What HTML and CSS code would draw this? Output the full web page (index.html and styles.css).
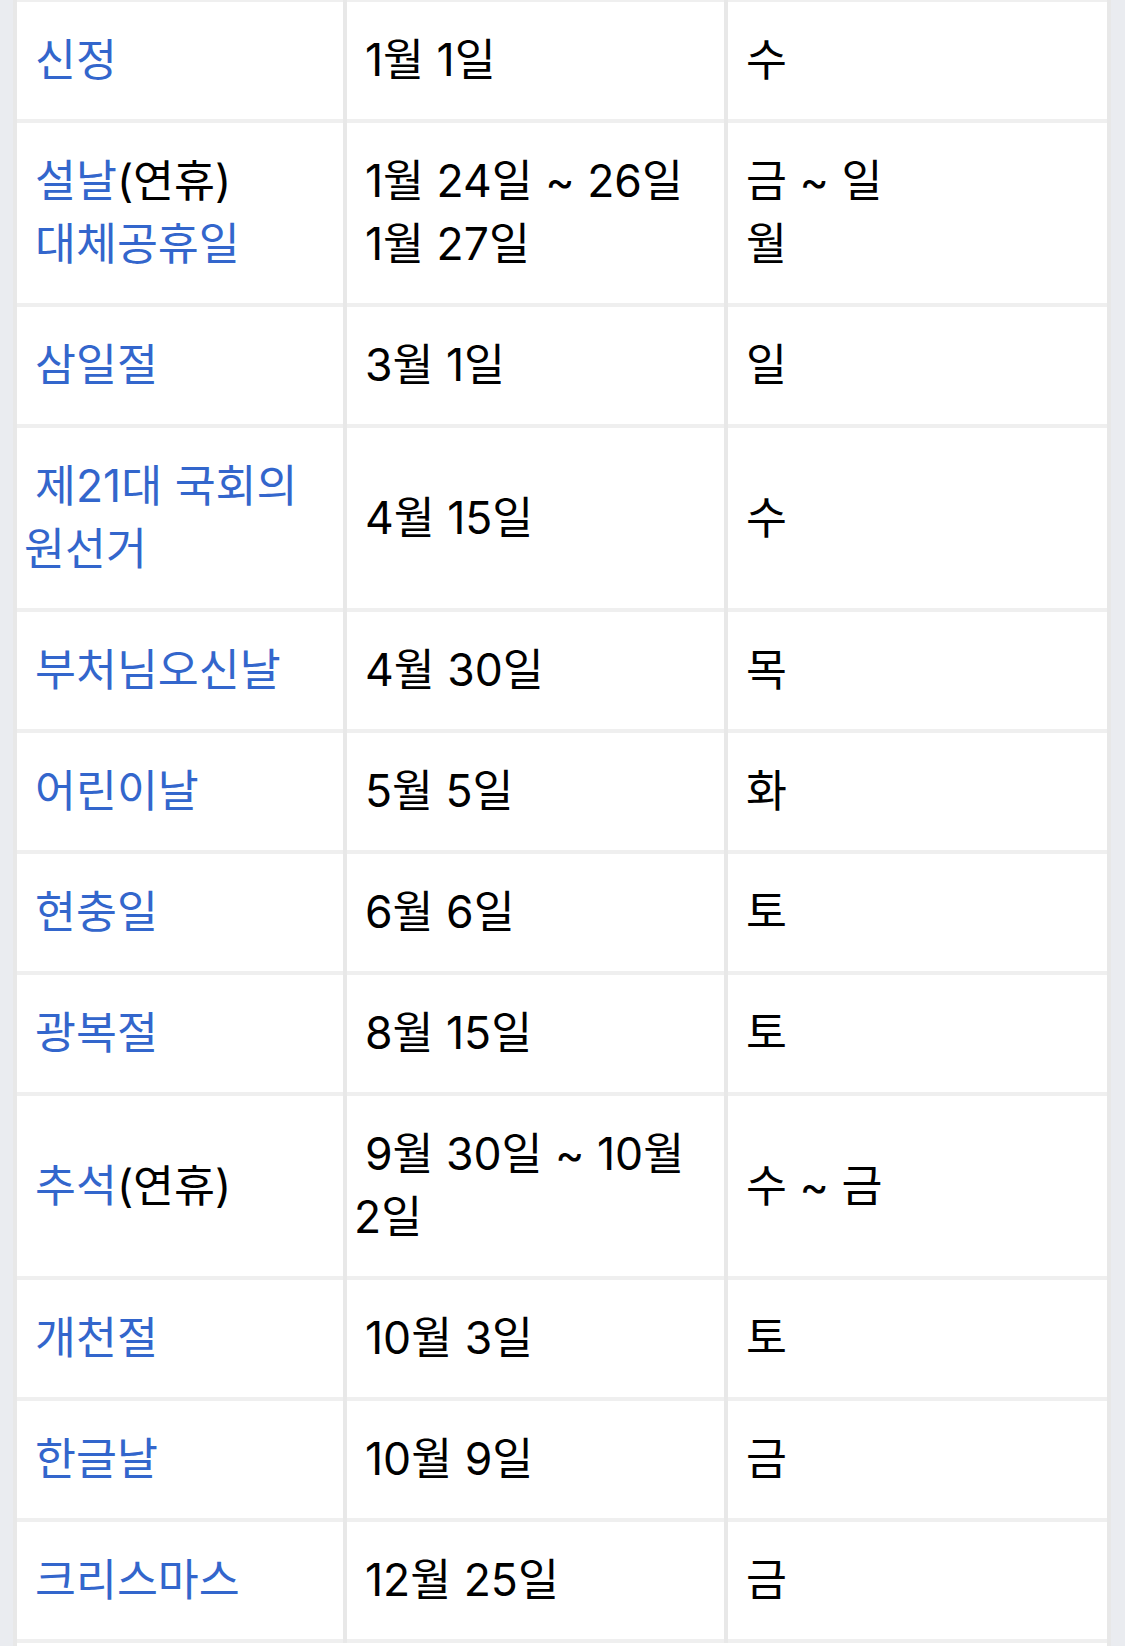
FILE: index.html
```html
<!DOCTYPE html>
<html lang="ko">
<head>
<meta charset="utf-8">
<title>2020년 공휴일</title>
<link rel="stylesheet" href="styles.css">
</head>
<body>
<table class="holidays">
  <colgroup>
    <col class="col-name">
    <col class="col-date">
    <col class="col-day">
  </colgroup>
  <tbody>
    <tr class="first">
      <td><div class="ln"><a href="#">신정</a></div></td>
      <td><div class="ln">1월 1일</div></td>
      <td><div class="ln">수</div></td>
    </tr>
    <tr>
      <td><div class="ln"><a href="#">설날</a>(연휴)</div><div class="ln"><a href="#">대체공휴일</a></div></td>
      <td><div class="ln">1월 24일 ~ 26일</div><div class="ln">1월 27일</div></td>
      <td><div class="ln">금 ~ 일</div><div class="ln">월</div></td>
    </tr>
    <tr>
      <td><div class="ln"><a href="#">삼일절</a></div></td>
      <td><div class="ln">3월 1일</div></td>
      <td><div class="ln">일</div></td>
    </tr>
    <tr>
      <td><div class="ln"><a href="#">제21대 국회의원선거</a></div></td>
      <td><div class="ln">4월 15일</div></td>
      <td><div class="ln">수</div></td>
    </tr>
    <tr>
      <td><div class="ln"><a href="#">부처님오신날</a></div></td>
      <td><div class="ln">4월 30일</div></td>
      <td><div class="ln">목</div></td>
    </tr>
    <tr>
      <td><div class="ln"><a href="#">어린이날</a></div></td>
      <td><div class="ln">5월 5일</div></td>
      <td><div class="ln">화</div></td>
    </tr>
    <tr>
      <td><div class="ln"><a href="#">현충일</a></div></td>
      <td><div class="ln">6월 6일</div></td>
      <td><div class="ln">토</div></td>
    </tr>
    <tr>
      <td><div class="ln"><a href="#">광복절</a></div></td>
      <td><div class="ln">8월 15일</div></td>
      <td><div class="ln">토</div></td>
    </tr>
    <tr>
      <td><div class="ln"><a href="#">추석</a>(연휴)</div></td>
      <td><div class="ln">9월 30일 ~ 10월 2일</div></td>
      <td><div class="ln">수 ~ 금</div></td>
    </tr>
    <tr>
      <td><div class="ln"><a href="#">개천절</a></div></td>
      <td><div class="ln">10월 3일</div></td>
      <td><div class="ln">토</div></td>
    </tr>
    <tr>
      <td><div class="ln"><a href="#">한글날</a></div></td>
      <td><div class="ln">10월 9일</div></td>
      <td><div class="ln">금</div></td>
    </tr>
    <tr>
      <td><div class="ln"><a href="#">크리스마스</a></div></td>
      <td><div class="ln">12월 25일</div></td>
      <td><div class="ln">금</div></td>
    </tr>
    <tr class="tail">
      <td colspan="3"></td>
    </tr>
  </tbody>
</table>
</body>
</html>
```
FILE: styles.css
```css
html, body {
  margin: 0;
  padding: 0;
  background: #eaecf0;
}

body {
  padding: 0 14px 0 13px;
  font-family: "Inter", "Noto Sans CJK KR", sans-serif;
  font-size: 44.5px;
  line-height: 63px;
  color: #000;
}

.holidays {
  width: 1098px;
  table-layout: fixed;
  border-collapse: separate;
  border-spacing: 4px 0;
  background: #e8e8e8;
}

.col-name { width: 326px; }
.col-date { width: 377px; }
.col-day  { width: 379px; }

.holidays td {
  background: #fff;
  padding: 27px 8px 27px 7px;
  vertical-align: middle;
  border-bottom: 4px solid #efefef;
}

.holidays .first td {
  border-top: 2px solid #efefef;
}

.ln {
  text-indent: 11px;
}

.holidays a {
  color: #3366cc;
  text-decoration: none;
}

.holidays .tail td {
  padding: 0;
  height: 20px;
  border-bottom: 0;
}
```
